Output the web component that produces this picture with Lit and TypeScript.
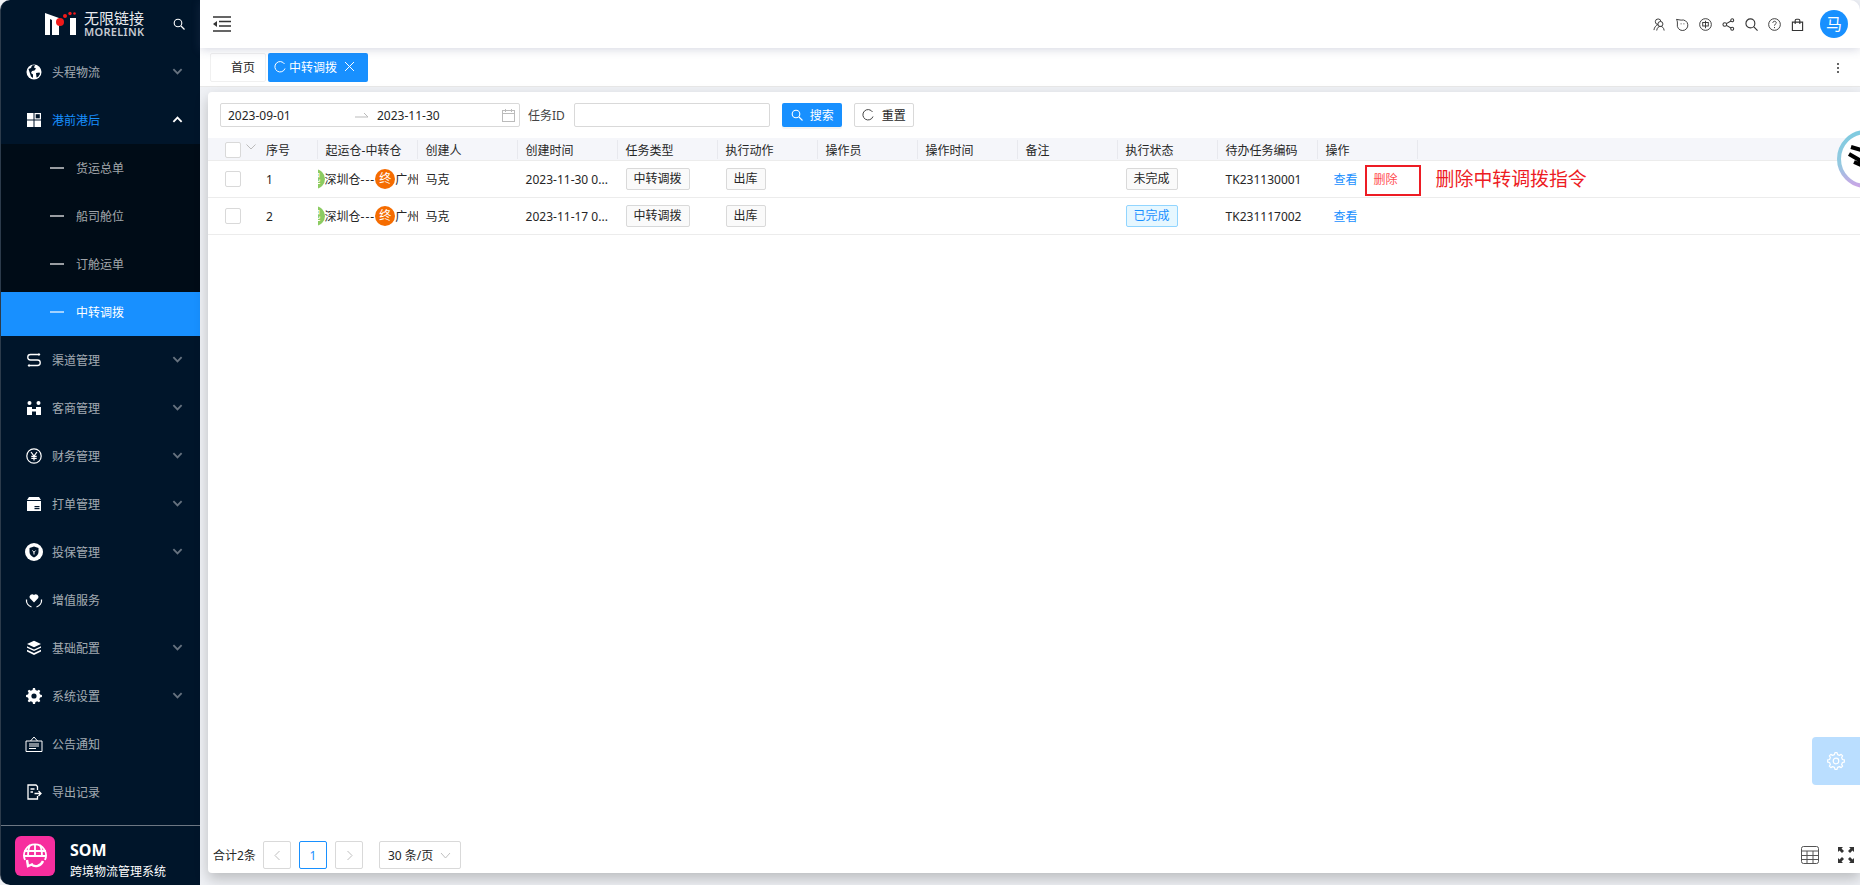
import { LitElement, html, css } from "lit";
import { customElement } from "lit/decorators.js";

// toothed outline for the settings icons
function gearPath(c: number, outer: number, inner: number, teeth: number) {
  const pts: string[] = [];
  const step = (Math.PI * 2) / teeth;
  for (let i = 0; i < teeth; i++) {
    const a = i * step - Math.PI / 2;
    const at = (r: number, t: number) => `${(c + r * Math.cos(a + t * step)).toFixed(2)} ${(c + r * Math.sin(a + t * step)).toFixed(2)}`;
    pts.push(at(inner, -0.3), at(outer, -0.16), at(outer, 0.16), at(inner, 0.3));
  }
  return `M${pts.join("L")}z`;
}

const chevron = html`<svg class="chev" viewBox="0 0 12 12"><path d="M1.5 3.5 6 8l4.500-4.500" fill="none" stroke="currentColor" stroke-width="2"/></svg>`;

const icons: Record<string, unknown> = {
  globe: html`<svg viewBox="0 0 16 16"><circle cx="8" cy="8" r="7.500" fill="#fff"/><path d="M2.500 5 5 4l1-2.500 3-.5-1 2.500 2 1-1.500 2L6 7l-1 2 2 1.500V14l-2-1.500-1-3zM10 9l3.500-.5.500 1.500-2 3-1.500.5z" fill="#00152a"/></svg>`,
  dash: html`<svg viewBox="0 0 16 16"><rect x="1" y="1" width="6.500" height="6.500" fill="#fff"/><rect x="9.100" y="1.600" width="5.300" height="5.300" fill="none" stroke="#fff" stroke-width="1.200"/><rect x="1" y="8.500" width="6.500" height="6.500" fill="#fff"/><rect x="8.500" y="8.500" width="6.500" height="6.500" fill="#fff"/></svg>`,
  swap: html`<svg viewBox="0 0 16 16"><path d="M14 2.500H4.500a2.700 2.700 0 0 0 0 5.500h7a2.700 2.700 0 0 1 0 5.500H2" fill="none" stroke="#fff" stroke-width="1.300"/><path d="M12.500 1l2 1.500-2 1.500zM3.500 12l-2 1.500 2 1.500z" fill="#fff"/></svg>`,
  people: html`<svg viewBox="0 0 16 16" fill="#fff"><circle cx="3.500" cy="3" r="2"/><circle cx="12.500" cy="3" r="2"/><path d="M1 7h5v2h4V7h5v8h-5v-3.500H6V15H1z"/></svg>`,
  yen: html`<svg viewBox="0 0 16 16"><circle cx="8" cy="8" r="7.200" fill="none" stroke="#fff" stroke-width="1.200"/><path d="M5 4l3 4 3-4M8 8v4.500M5.300 8.300h5.400M5.300 10.300h5.400" fill="none" stroke="#fff" stroke-width="1.200"/></svg>`,
  print: html`<svg viewBox="0 0 16 16"><path d="M3 1h10l2 3H1z" fill="#fff"/><path d="M1 5h14v10H1z" fill="#fff"/><rect x="8.500" y="10" width="5" height="1.200" fill="#00152a"/><rect x="8.500" y="12" width="5" height="1.200" fill="#00152a"/></svg>`,
  shield: html`<svg class="big" viewBox="0 0 18 18"><circle cx="9" cy="9" r="9" fill="#fff"/><path d="M9 3.500l4.500 1.500v4c0 2.500-2 4.300-4.500 5.500C6.500 13.300 4.500 11.500 4.500 9V5z" fill="#00152a"/><path d="M7.300 7.500 9 9.200l1.700-1.700M9 9v2.500" stroke="#fff" stroke-width="1" fill="none"/></svg>`,
  heart: html`<svg class="big" viewBox="0 0 18 18"><path d="M9 11.500 4.700 7a2.700 2.700 0 0 1 4.300-3 2.700 2.700 0 0 1 4.300 3z" fill="#fff"/><path d="M1.500 8.500c-.5 3.500 2 6.500 5 7.500M16.500 8.500c.5 3.500-2 6.500-5 7.500" fill="none" stroke="#fff" stroke-width="1.300"/></svg>`,
  layers: html`<svg viewBox="0 0 16 16" fill="#fff"><path d="M8 .8 15 4 8 7.200 1 4z"/><path d="M1 6.300 8 9.500l7-3.200v1.500L8 11 1 7.800z"/><path d="M1 9.800 8 13l7-3.200v1.700L8 15l-7-3.500z"/></svg>`,
  gear: html`<svg viewBox="0 0 16 16"><path d="${gearPath(8, 8, 6.2, 8)}" fill="#fff"/><circle cx="8" cy="8" r="2.600" fill="#00152a"/></svg>`,
  notice: html`<svg class="big" viewBox="0 0 18 18"><path d="M1 6h16v10.500H1zM5.500 6 9 2l3.500 4" fill="none" stroke="#fff" stroke-width="1"/><path d="M4 9h10M4 11h10M4 13.500h7" stroke="#fff" stroke-width="1"/></svg>`,
  exportFile: html`<svg viewBox="0 0 16 16"><path d="M11.500 6V2.500l-1.500-1.500H2v14h9.500v-3" fill="none" stroke="#fff" stroke-width="1.300"/><path d="M4.500 5h4M4.500 8h2.500M8.500 9.500H15M12.500 7l2.500 2.500L12.500 12" fill="none" stroke="#fff" stroke-width="1.300"/></svg>`,
};

type MenuItem = { label: string; icon: string; arrow?: boolean };

const topMenu: MenuItem[] = [
  { label: "渠道管理", icon: "swap", arrow: true },
  { label: "客商管理", icon: "people", arrow: true },
  { label: "财务管理", icon: "yen", arrow: true },
  { label: "打单管理", icon: "print", arrow: true },
  { label: "投保管理", icon: "shield", arrow: true },
  { label: "增值服务", icon: "heart" },
  { label: "基础配置", icon: "layers", arrow: true },
  { label: "系统设置", icon: "gear", arrow: true },
  { label: "公告通知", icon: "notice" },
  { label: "导出记录", icon: "exportFile" },
];

const subMenu = ["货运总单", "船司舱位", "订舱运单", "中转调拨"];

const columns = ["创建人", "创建时间", "任务类型", "执行动作", "操作员", "操作时间", "备注", "执行状态", "待办任务编码", "操作"];

const rows = [
  { no: 1, time: "2023-11-30 0...", status: "未完成", done: false, code: "TK231130001", del: true },
  { no: 2, time: "2023-11-17 0...", status: "已完成", done: true, code: "TK231117002", del: false },
];

@customElement("app-root")
export class AppRoot extends LitElement {
  static styles = css`
    :host {
      display: block;
      width: 1860px;
      height: 885px;
      overflow: hidden;
      font-family: "Noto Sans", "Noto Sans CJK SC", sans-serif;
      font-size: 12px;
      color: #222;
    }
    * { box-sizing: border-box; }
    .app { display: flex; height: 885px; background: #eff1f5; }

    .side {
      width: 200px;
      flex: none;
      background: #00152a;
      display: flex;
      flex-direction: column;
      border-radius: 10px 0 0 10px;
      border-left: 1px solid #2c3b4b;
      color: rgba(255, 255, 255, 0.65);
    }
    .logo { height: 48px; display: flex; align-items: center; padding-left: 44px; color: #fff; }
    .logo .brand { width: 33px; height: 26px; flex: none; }
    .logo .names { margin-left: 6px; display: flex; flex-direction: column; width: 62px; }
    .logo .cn { font-size: 15px; line-height: 16px; white-space: nowrap; color: #e8eaee; }
    .logo .en { font-size: 11px; line-height: 12px; letter-spacing: 0.3px; font-weight: 600; color: #c6cad0; white-space: nowrap; }
    .logo .find { width: 12px; height: 12px; margin-left: 27px; }
    .item { height: 48px; display: flex; align-items: center; padding-left: 24px; flex: none; }
    .item .ico { width: 18px; height: 18px; flex: none; margin-right: 9px; display: flex; align-items: center; justify-content: center; }
    .item .ico svg { width: 16px; height: 16px; flex: none; }
    .item .ico svg.big { width: 18px; height: 18px; }
    .item span { flex: 1; line-height: 16px; margin-top: 2px; }
    .chev { width: 11px; height: 11px; margin-right: 17px; margin-top: -1px; color: rgba(255, 255, 255, 0.4); }
    .item.open { color: #1890ff; }
    .item.open .chev { color: #fff; transform: rotate(180deg); }
    .sub { background: #000c17; }
    .sub .row { height: 48px; display: flex; align-items: center; padding-left: 49px; }
    .sub .row i { width: 14px; height: 2px; background: rgba(255, 255, 255, 0.6); margin-right: 12px; }
    .sub .row.on { background: #1890ff; color: #fff; height: 44px; margin-top: 4px; padding-bottom: 4px; }
    .side .foot {
      margin-top: auto;
      height: 60px;
      border-top: 1px solid #6d7783;
      display: flex;
      align-items: center;
      padding-left: 14px;
      color: #fff;
    }
    .foot .pink { width: 40px; height: 40px; border-radius: 6px; background: #f72e9e; margin-right: 15px; display: flex; align-items: center; justify-content: center; }
    .foot .pink svg { width: 26px; height: 26px; }
    .foot .txt { padding-top: 7px; }
    .foot b { display: block; font-size: 16px; line-height: 22px; margin-bottom: 3px; }
    .foot small { display: block; font-size: 12px; line-height: 16px; white-space: nowrap; }

    .main { flex: 1; min-width: 0; display: flex; flex-direction: column; }
    .head {
      height: 48px;
      flex: none;
      background: #fff;
      border-radius: 0 10px 0 0;
      box-shadow: 0 2px 10px rgba(80, 90, 130, 0.22);
      display: flex;
      align-items: center;
      padding: 0 12px 0 13px;
      position: relative;
    }
    .head .fold { width: 18px; height: 16px; }
    .head .tools { margin-left: auto; display: flex; align-items: center; }
    .head .tools svg { width: 13px; height: 13px; margin-right: 10px; }
    .avatar { width: 28px; height: 28px; border-radius: 50%; background: #1890ff; color: #fff; font-size: 16px; line-height: 28px; text-align: center; margin-left: 6px; }

    .tabs { height: 39px; flex: none; background: #fff; display: flex; align-items: flex-start; padding: 5px 0 0 10px; border-bottom: 1px solid #e8e8e8; }
    .tab { height: 29px; display: flex; align-items: center; border-radius: 2px; padding-bottom: 2px; }
    .tab.home { width: 56px; border: 1px solid #f0f0f0; justify-content: flex-end; padding-right: 10px; color: #262626; }
    .tab.cur { width: 100px; margin-left: 2px; background: #1890ff; color: #fff; padding-left: 6px; }
    .tab.cur svg { width: 12px; height: 12px; margin-right: 3px; }
    .tab.cur .x { width: 11px; height: 11px; margin: 0 0 0 7px; }
    .tabs .more { margin-left: auto; margin-right: 20px; width: 3px; height: 29px; display: flex; flex-direction: column; justify-content: center; gap: 2px; }
    .tabs .more i { width: 2px; height: 2px; background: #666; }

    .card {
      flex: 1;
      margin: 5px 0 12px 8px;
      background: #fff;
      border-radius: 4px 0 0 4px;
      box-shadow: 0 6px 14px rgba(0, 0, 0, 0.22);
      display: flex;
      flex-direction: column;
      position: relative;
      min-height: 0;
    }
    .filters { display: flex; align-items: center; margin: 11px 0 11px 12px; height: 24px; }
    .range { width: 300px; height: 24px; border: 1px solid #d9d9d9; border-radius: 2px; display: flex; align-items: center; padding-left: 7px; color: #262626; }
    .range .d1 { width: 127px; }
    .range .arrow { width: 14px; height: 6px; margin-right: 8px; }
    .range .d2 { width: 125px; }
    .range .cal { width: 13px; height: 13px; }
    .lbl { margin: 0 9px 0 8px; color: #444; }
    .input { width: 196px; height: 24px; border: 1px solid #d9d9d9; border-radius: 2px; }
    .btn { height: 24px; border-radius: 2px; display: flex; align-items: center; }
    .btn svg { width: 12px; height: 12px; }
    .btn.pri { width: 60px; margin-left: 12px; background: #1890ff; color: #fff; padding-left: 9px; gap: 7px; box-shadow: 0 2px 0 rgba(0, 0, 0, 0.045); }
    .btn.def { width: 60px; margin-left: 12px; border: 1px solid #d9d9d9; padding-left: 7px; gap: 8px; color: #262626; }

    .grid { display: grid; grid-template-columns: 58px 51.6px repeat(11, 100px) 1fr; }
    .thead { background: #f5f6fa; height: 23px; border-bottom: 1px solid #ececec; }
    .th { margin: 2px 0 1px; border-right: 1px solid #e8e9ee; display: flex; align-items: center; padding-left: 8px; white-space: nowrap; color: #262626; }
    .th.sel { border-right: none; padding-left: 17px; }
    .th.no { padding-left: 0; }
    .th.last { border-right: none; }
    .check { width: 16px; height: 16px; background: #fff; border: 1px solid #d9d9d9; border-radius: 2px; flex: none; }
    .th svg { width: 10px; height: 6px; margin: -6px 0 0 5px; color: #bbb; }
    .tr { height: 37px; border-bottom: 1px solid #ececec; }
    .td { display: flex; align-items: center; padding-left: 8px; min-width: 0; overflow: hidden; white-space: nowrap; color: #262626; }
    .td.sel { padding-left: 17px; }
    .td.no { padding-left: 0; }
    .td.route { padding: 0; }
    .td.route .dash { letter-spacing: 1px; }
    .dot { width: 20px; height: 20px; border-radius: 50%; flex: none; color: #fff; text-align: center; line-height: 20px; font-size: 12px; }
    .dot.start { background: #8bcb62; margin-left: -13px; }
    .dot.end { background: #f56c00; }
    .tag { height: 22px; line-height: 20px; border: 1px solid #d9d9d9; border-radius: 2px; background: #fafafa; padding: 0 7px; color: #262626; }
    .tag.done { background: #e6f7ff; border-color: #91d5ff; color: #1890ff; }
    .ops { overflow: visible; position: relative; padding-left: 16px; gap: 16px; }
    .ops a { color: #1890ff; }
    .ops a.del { color: #ff4d4f; }
    .callout { position: absolute; left: 47px; top: 4px; width: 56px; height: 31px; border: 2px solid #ed1c24; }
    .note { position: absolute; left: 118px; top: 5px; font-size: 18.900px; line-height: 27px; color: #ed1c24; }

    .pager { margin-top: auto; height: 28px; margin-bottom: 4px; display: flex; align-items: center; padding: 0 6px 0 5px; }
    .pager .sum { width: 50px; color: #262626; }
    .pg { width: 28px; height: 28px; border: 1px solid #d9d9d9; border-radius: 2px; margin-right: 8px; display: flex; align-items: center; justify-content: center; color: #bfbfbf; }
    .pg svg { width: 11px; height: 11px; }
    .pg.on { border-color: #1890ff; color: #1890ff; }
    .size { width: 82px; height: 28px; border: 1px solid #d9d9d9; border-radius: 2px; margin-left: 8px; display: flex; align-items: center; padding-left: 8px; gap: 7px; color: #262626; }
    .size svg { width: 11px; height: 11px; color: #bfbfbf; }
    .pager .gridicon { width: 18px; height: 18px; margin-left: auto; }
    .pager .full { width: 16px; height: 16px; margin-left: 19px; }

    .orb { position: absolute; right: 0; top: 38px; width: 23px; height: 58px; overflow: hidden; }
    .orb svg { width: 58px; height: 58px; display: block; }
    .gearbtn { position: absolute; right: 0; top: 645px; width: 48px; height: 48px; background: #badeff; border-radius: 4px 0 0 4px; display: flex; align-items: center; justify-content: center; }
    .gearbtn svg { width: 18px; height: 18px; }
  `;

  renderSide() {
    return html`
      <aside class="side">
        <div class="logo">
          <svg class="brand" viewBox="0 0 33 26">
            <path d="M0 2 14 7 14 24 7 24 7 9 5 8 5 24 0 24z" fill="#fff"/>
            <path d="M25 7h6v17h-6z" fill="#fff"/>
            <circle cx="15" cy="11" r="4" fill="#f01a1a"/>
            <circle cx="20" cy="5" r="2" fill="#f01a1a"/>
            <circle cx="25" cy="2.500" r="1.700" fill="#f01a1a"/>
            <circle cx="29.500" cy="2.500" r="1.300" fill="#f01a1a"/>
          </svg>
          <div class="names"><div class="cn">无限链接</div><div class="en">MORELINK</div></div>
          <svg class="find" viewBox="0 0 12 12"><circle cx="5" cy="5" r="3.800" fill="none" stroke="#fff" stroke-width="1.100"/><path d="M8 8l3.500 3.500" stroke="#fff" stroke-width="1.200"/></svg>
        </div>
        <div class="item"><div class="ico">${icons.globe}</div><span>头程物流</span>${chevron}</div>
        <div class="item open"><div class="ico">${icons.dash}</div><span>港前港后</span>${chevron}</div>
        <div class="sub">
          ${subMenu.map((s, i) => html`<div class="row ${i === 3 ? "on" : ""}"><i></i>${s}</div>`)}
        </div>
        ${topMenu.map((m) => html`<div class="item"><div class="ico">${icons[m.icon]}</div><span>${m.label}</span>${m.arrow ? chevron : ""}</div>`)}
        <div class="foot">
          <div class="pink">
            <svg viewBox="0 0 26 26" fill="none" stroke="#fff" stroke-width="1.800">
              <path d="M3 17A11 11 0 1 1 23 17"/>
              <path d="M2 8h22M2 13h22M13 1v13M8 2c-2 4-2 8-2 12M18 2c2 4 2 8 2 12"/>
              <path d="M9 21c4 4 10 2 12-3M5 17l1 6 5-2" stroke-width="2.400"/>
            </svg>
          </div>
          <div class="txt"><b>SOM</b><small>跨境物流管理系统</small></div>
        </div>
      </aside>
    `;
  }

  renderHead() {
    return html`
      <header class="head">
        <svg class="fold" viewBox="0 0 18 16"><path d="M0 1h18M6 5.500h12M6 10h12M0 15h18" stroke="#333" stroke-width="1.600"/><path d="M4 5v6L0 8z" fill="#333"/></svg>
        <div class="tools">
          <svg viewBox="0 0 14 14" fill="none" stroke="#333"><circle cx="5.500" cy="4" r="3"/><circle cx="8" cy="6.500" r="2.700" fill="#fff"/><path d="M1 13c.5-3 2-5 4-5.500M4 13.500c.3-3 2-4.500 4-4.500s3.700 1.500 4 4.500"/></svg>
          <svg viewBox="0 0 14 14" fill="none" stroke="#333"><path d="M.5 1.500 5.500 2.300A5.700 5.700 0 1 1 1.500 6.500C1.500 5 1.700 3.500.5 1.500z"/><path d="M5.500 6v.7M8.500 6v.7" stroke-width="1.200"/></svg>
          <svg viewBox="0 0 14 14" fill="none" stroke="#333"><circle cx="7" cy="7" r="6.300"/><rect x="4" y="4.800" width="6" height="3.800"/><path d="M7 3v8"/></svg>
          <svg viewBox="0 0 14 14" fill="none" stroke="#333" stroke-width="1.100"><circle cx="3" cy="7" r="2"/><circle cx="11" cy="2.500" r="1.600"/><circle cx="11" cy="11.500" r="1.600"/><path d="M4.800 6 9.600 3.300M4.800 8l4.800 2.700"/></svg>
          <svg viewBox="0 0 14 14" fill="none" stroke="#333" stroke-width="1.200"><circle cx="5.800" cy="5.800" r="4.800"/><path d="M9.300 9.300 13.500 13.500"/></svg>
          <svg viewBox="0 0 14 14" fill="none" stroke="#333"><circle cx="7" cy="7" r="6.300"/><path d="M5.200 5.300C5.300 4 6.100 3.500 7 3.500c1.100 0 1.900.7 1.900 1.700 0 1.300-1.900 1.500-1.900 3"/><path d="M7 9.700v1.200"/></svg>
          <svg viewBox="0 0 14 14" fill="none" stroke="#333" stroke-width="1.200"><path d="M1.500 4.500h11v9h-11z"/><path d="M4.500 6.500V2.800A1.500 1.500 0 0 1 6 1.300h2a1.500 1.500 0 0 1 1.500 1.500v3.700"/></svg>
          <div class="avatar">马</div>
        </div>
      </header>
      <nav class="tabs">
        <div class="tab home">首页</div>
        <div class="tab cur">
          <svg viewBox="0 0 12 12"><path d="M10.500 3A5.200 5.200 0 1 0 11 7.500" fill="none" stroke="#fff" stroke-width="1"/></svg>
          中转调拨
          <svg class="x" viewBox="0 0 11 11"><path d="M1 1l9 9M10 1l-9 9" stroke="#fff" stroke-width="1"/></svg>
        </div>
        <div class="more"><i></i><i></i><i></i></div>
      </nav>
    `;
  }

  renderTable() {
    return html`
      <div class="grid thead">
        <div class="th sel"><div class="check"></div><svg viewBox="0 0 10 6"><path d="M.5.500 5 5 9.500.5" fill="none" stroke="currentColor"/></svg></div>
        <div class="th no">序号</div>
        <div class="th">起运仓-中转仓</div>
        ${columns.map((c) => html`<div class="th">${c}</div>`)}
        <div class="th last"></div>
      </div>
      ${rows.map((r) => html`
        <div class="grid tr">
          <div class="td sel"><div class="check"></div></div>
          <div class="td no">${r.no}</div>
          <div class="td route"><div class="dot start">起</div>深圳仓<span class="dash">---</span><div class="dot end">终</div>广州</div>
          <div class="td">马克</div>
          <div class="td">${r.time}</div>
          <div class="td"><span class="tag">中转调拨</span></div>
          <div class="td"><span class="tag">出库</span></div>
          <div class="td"></div>
          <div class="td"></div>
          <div class="td"></div>
          <div class="td"><span class="tag ${r.done ? "done" : ""}">${r.status}</span></div>
          <div class="td">${r.code}</div>
          <div class="td ops">
            <a>查看</a>
            ${r.del ? html`<a class="del">删除</a><div class="callout"></div><div class="note">删除中转调拨指令</div>` : ""}
          </div>
          <div class="td"></div>
        </div>
      `)}
    `;
  }

  render() {
    return html`
      <div class="app">
        ${this.renderSide()}
        <div class="main">
          ${this.renderHead()}
          <section class="card">
            <div class="filters">
              <div class="range">
                <span class="d1">2023-09-01</span>
                <svg class="arrow" viewBox="0 0 14 6"><path d="M0 5h13L9 1" fill="none" stroke="#bbb"/></svg>
                <span class="d2">2023-11-30</span>
                <svg class="cal" viewBox="0 0 13 13" fill="none" stroke="#bbb"><rect x=".5" y="1.500" width="12" height="11"/><path d="M.5 4.500h12M3.500 0v3M9.500 0v3"/></svg>
              </div>
              <span class="lbl">任务ID</span>
              <div class="input"></div>
              <div class="btn pri"><svg viewBox="0 0 12 12" fill="none" stroke="#fff" stroke-width="1.100"><circle cx="5" cy="5" r="3.800"/><path d="M8 8l3.500 3.500"/></svg>搜索</div>
              <div class="btn def"><svg viewBox="0 0 12 12"><path d="M10.500 3A5.200 5.200 0 1 0 11 7.500" fill="none" stroke="#444"/></svg>重置</div>
            </div>
            ${this.renderTable()}
            <div class="pager">
              <span class="sum">合计2条</span>
              <div class="pg"><svg viewBox="0 0 11 11"><path d="M7.500 1 3 5.500 7.500 10" fill="none" stroke="currentColor"/></svg></div>
              <div class="pg on">1</div>
              <div class="pg"><svg viewBox="0 0 11 11"><path d="M3.500 1 8 5.500 3.500 10" fill="none" stroke="currentColor"/></svg></div>
              <div class="size">30 条/页<svg viewBox="0 0 11 11"><path d="M1 3l4.500 5L10 3" fill="none" stroke="currentColor"/></svg></div>
              <svg class="gridicon" viewBox="0 0 18 18" fill="none" stroke="#555"><rect x=".5" y=".5" width="17" height="17" rx="2"/><path d="M.5 5h17M.5 9.500h17M.5 13.500h17M6 5v12.500M12 5v12.500"/></svg>
              <svg class="full" viewBox="0 0 16 16" fill="#333"><path d="M0 0h5L3.500 1.500 6 4 4 6 1.500 3.500 0 5zM16 0v5l-1.500-1.500L12 6l-2-2 2.500-2.500L11 0zM0 16v-5l1.500 1.500L4 10l2 2-2.500 2.500L5 16zM16 16h-5l1.500-1.500L10 12l2-2 2.500 2.500L16 11z"/></svg>
            </div>
            <div class="orb">
              <svg viewBox="0 0 58 58">
                <defs><linearGradient id="ring" x1="0" y1="0" x2="0" y2="1"><stop offset="0" stop-color="#7fcbe0"/><stop offset="0.6" stop-color="#93c9e0"/><stop offset="1" stop-color="#c9a6e6"/></linearGradient></defs>
                <circle cx="29" cy="29" r="27" fill="#fff" stroke="url(#ring)" stroke-width="4"/>
                <path d="M14 17l10 3M12 24l12 7M17 32l7 3" stroke="#000" stroke-width="4" fill="none"/>
              </svg>
            </div>
            <div class="gearbtn">
              <svg viewBox="0 0 18 18" fill="none" stroke="#fff" stroke-width="1.200" stroke-linejoin="round"><path d="${gearPath(9, 8.4, 6.6, 8)}"/><circle cx="9" cy="9" r="2.800"/></svg>
            </div>
          </section>
        </div>
      </div>
    `;
  }
}
